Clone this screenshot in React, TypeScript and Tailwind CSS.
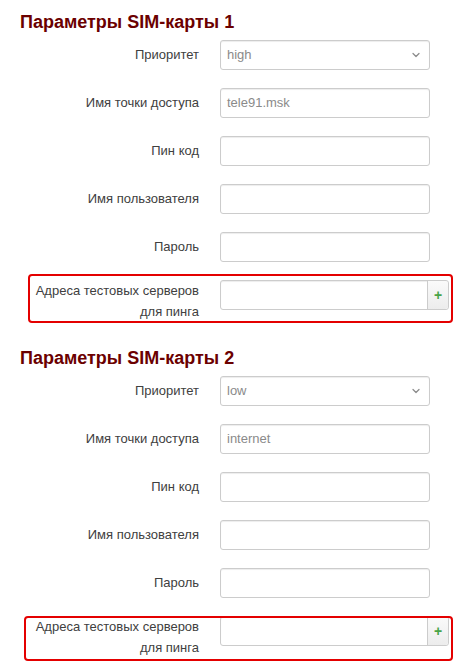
import { ChevronDown } from 'lucide-react'

type Field = { label: string; kind: 'select' | 'text'; value?: string }

const SIMS: { title: string; fields: Field[]; mark: string }[] = [
  {
    title: 'Параметры SIM-карты 1',
    fields: [
      { label: 'Приоритет', kind: 'select', value: 'high' },
      { label: 'Имя точки доступа', kind: 'text', value: 'tele91.msk' },
      { label: 'Пин код', kind: 'text' },
      { label: 'Имя пользователя', kind: 'text' },
      { label: 'Пароль', kind: 'text' },
    ],
    mark: '-top-[6px] -bottom-[1px] left-[28px] right-[11px]',
  },
  {
    title: 'Параметры SIM-карты 2',
    fields: [
      { label: 'Приоритет', kind: 'select', value: 'low' },
      { label: 'Имя точки доступа', kind: 'text', value: 'internet' },
      { label: 'Пин код', kind: 'text' },
      { label: 'Имя пользователя', kind: 'text' },
      { label: 'Пароль', kind: 'text' },
    ],
    mark: 'top-0 -bottom-[3px] left-[24px] right-[11px]',
  },
]

function Row({ field }: { field: Field }) {
  return (
    <div className="flex items-center h-[30px]">
      <div className="w-[200px] pr-[1px] text-right text-[13px] text-[#404040]">{field.label}</div>
      <div className="ml-[20px] w-[210px] h-[30px] relative rounded-[3px] border border-[#cccccc] bg-white shadow-[inset_0_1px_1px_rgba(0,0,0,0.075)] flex items-center px-[6px] text-[13px] text-[#8a8a8a]">
        {field.value}
        {field.kind === 'select' && (
          <ChevronDown size={12} strokeWidth={2.5} className="absolute right-[7px] top-[8px] text-[#8c8c8c]" />
        )}
      </div>
    </div>
  )
}

export default function App() {
  return (
    <div className="w-[464px] min-h-[664px] bg-white font-['Liberation_Sans',Arial,sans-serif] flex flex-col gap-[14px]">
      {SIMS.map((sim) => (
        <section key={sim.title} className="pt-[12px] flex flex-col">
          <h2 className="pl-[20px] text-[18px] leading-[20px] font-bold text-[#6b0000] mb-[8px]">{sim.title}</h2>
          <div className="flex flex-col gap-[18px]">
            {sim.fields.map((f) => (
              <Row key={f.label} field={f} />
            ))}
            <div className="relative flex items-start">
              <div className="w-[200px] pr-[1px] text-right text-[13px] leading-[21px] text-[#404040]">
                Адреса тестовых серверов
                <br />
                для пинга
              </div>
              <div className="ml-[20px] w-[229px] h-[30px] flex rounded-[3px] border border-[#cccccc] bg-white shadow-[inset_0_1px_1px_rgba(0,0,0,0.075)]">
                <div className="flex-1" />
                <div className="w-[21px] h-full border-l border-[#cccccc] bg-gradient-to-b from-[#fafafa] to-[#ececec] rounded-r-[3px] flex items-center justify-center text-[14px] font-bold leading-none text-[#47a447]">
                  +
                </div>
              </div>
              <div className={`absolute ${sim.mark} border-2 border-[#e40000] rounded-[4px] pointer-events-none`} />
            </div>
          </div>
        </section>
      ))}
    </div>
  )
}
